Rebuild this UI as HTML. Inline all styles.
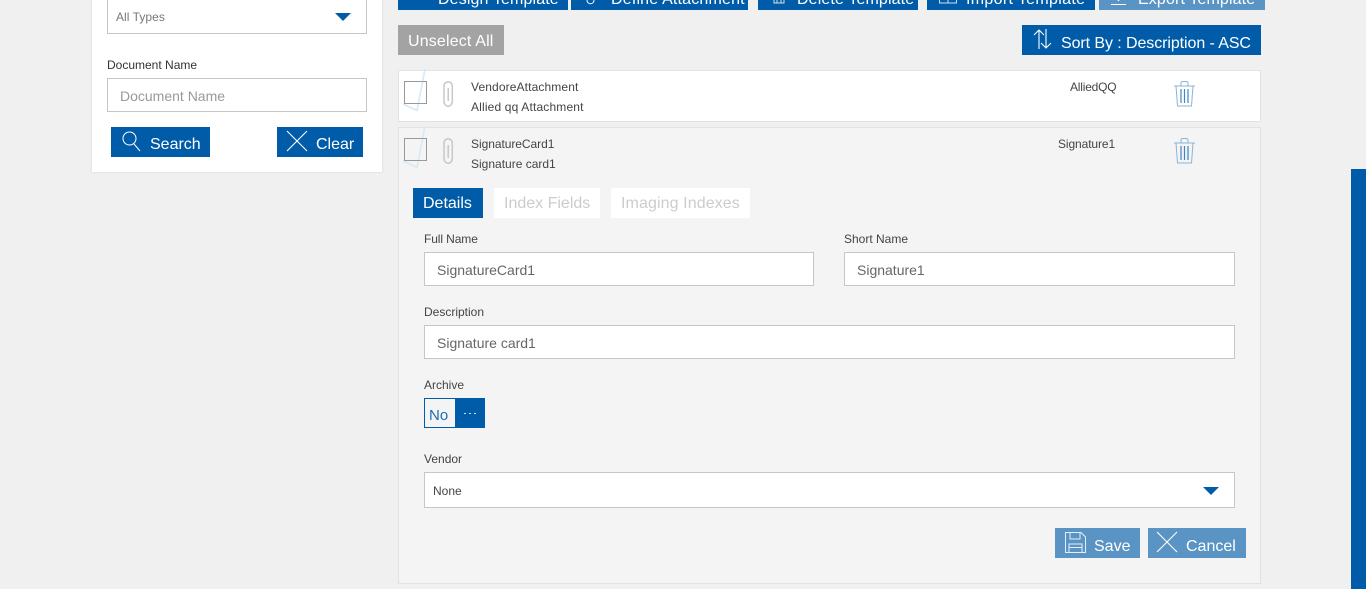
<!DOCTYPE html>
<html>
<head>
<meta charset="utf-8">
<style>
html,body{margin:0;padding:0;width:1366px;height:589px;overflow:hidden;background:#f0f0f0;font-family:"Liberation Sans",sans-serif;}
.a{position:absolute;box-sizing:border-box;}
.t{position:absolute;white-space:nowrap;line-height:16px;}
.btn{position:absolute;background:#005ca8;}
.w{color:#fff;font-size:16px;}
.s{font-size:12px;color:#444;}
.l{font-size:12px;color:#444;}
.inp{position:absolute;box-sizing:border-box;background:#fff;border:1px solid #c6c6c6;height:34px;}
.v{font-size:14px;color:#666;}
svg{position:absolute;overflow:visible;}
</style>
</head>
<body>
<!-- sidebar -->
<div class="a" style="left:92px;top:-5px;width:290px;height:177px;background:#fff;box-shadow:0 0 2px #d0d0d0;"></div>
<div class="inp" style="left:107px;top:-5px;width:260px;height:39px;"></div>
<div class="t" style="left:116px;top:9px;font-size:12px;color:#777;letter-spacing:.05px;">All Types</div>
<svg style="left:335px;top:13px" width="16" height="8"><path d="M0 0H16L8 8Z" fill="#005ca8"/></svg>
<div class="t" style="left:107px;top:57px;font-size:12px;color:#333;">Document Name</div>
<div class="inp" style="left:107px;top:78px;width:260px;"></div>
<div class="t" style="left:120px;top:88px;font-size:14px;color:#999;">Document Name</div>
<div class="btn" style="left:111px;top:127px;width:99px;height:30px;"></div>
<svg style="left:122px;top:131px" width="18" height="20" fill="none" stroke="#fff" stroke-width="1"><circle cx="7.5" cy="7.5" r="6.5"/><path d="M12 13L18 20"/></svg>
<div class="t w" style="left:150px;top:137px;">Search</div>
<div class="btn" style="left:277px;top:127px;width:86px;height:30px;"></div>
<svg style="left:287px;top:131px" width="20" height="20" stroke="#fff" stroke-width="1.1"><path d="M0 0L20 20M20 0L0 20"/></svg>
<div class="t w" style="left:316px;top:137px;">Clear</div>

<!-- top toolbar -->
<div class="btn" style="left:398px;top:-20px;width:170px;height:30px;"></div>
<svg style="left:412px;top:-4px" width="14" height="8" stroke="#fff" stroke-width="1"><path d="M6.500 0V4"/></svg>
<div class="t w" style="left:438px;top:-8px;letter-spacing:.13px;">Design Template</div>
<div class="btn" style="left:571px;top:-20px;width:177px;height:30px;"></div>
<svg style="left:586px;top:-4px" width="10" height="9" fill="none" stroke="#fff" stroke-width="1"><path d="M1 0V4C1 9 8 9 8 4V0"/></svg>
<div class="t w" style="left:611px;top:-8px;letter-spacing:.18px;">Define Attachment</div>
<div class="btn" style="left:758px;top:-20px;width:160px;height:30px;"></div>
<svg style="left:772px;top:-2px" width="14" height="7" fill="none" stroke="#cfe0f0" stroke-width="1"><path d="M0 0H14M2 0V5H12V0M5 0V5M9 0V5"/></svg>
<div class="t w" style="left:797px;top:-8px;letter-spacing:.13px;">Delete Template</div>
<div class="btn" style="left:927px;top:-20px;width:168px;height:30px;"></div>
<svg style="left:939px;top:-3px" width="18" height="8" fill="none" stroke="#cfe0f0" stroke-width="1"><path d="M0.500 0V6H17.500V0M9 0V6"/></svg>
<div class="t w" style="left:966px;top:-8px;letter-spacing:.33px;">Import Template</div>
<div class="btn" style="left:1099px;top:-20px;width:166px;height:30px;background:#5a94c4;"></div>
<svg style="left:1111px;top:-3px" width="16" height="9" fill="none" stroke="#fff" stroke-width="1"><path d="M0 7.500H15" /><path d="M5 1L7.500 3.500L10 1" /></svg>
<div class="t w" style="left:1138px;top:-8px;letter-spacing:.13px;">Export Template</div>

<!-- second row -->
<div class="a" style="left:398px;top:25px;width:106px;height:30px;background:#a3a3a3;"></div>
<div class="t w" style="left:408px;top:34px;letter-spacing:.16px;">Unselect All</div>
<div class="btn" style="left:1022px;top:25px;width:239px;height:30px;"></div>
<svg style="left:1033px;top:29px" width="19" height="21" fill="none" stroke="#fff" stroke-width="1.1"><path d="M6 20V1M1 6L6 1L11 6M13 0V19M8 14L13 19L18 14"/></svg>
<div class="t w" style="left:1061px;top:36px;letter-spacing:-.08px;">Sort By : Description - ASC</div>

<!-- row 1 -->
<div class="a" style="left:398px;top:70px;width:863px;height:52px;background:#fff;border:1px solid #e2e2e2;"></div>
<svg style="left:404px;top:69px" width="24" height="44" fill="none" stroke="#d8e8f5" stroke-width="1.6"><path d="M-1 35L13 41.500L21 0"/></svg>
<div class="a" style="left:404px;top:81px;width:23px;height:23px;border:1px solid #999;"></div>
<svg style="left:443px;top:81px" width="11" height="26" fill="none" stroke="#c8c8c8" stroke-width="1.500"><path d="M9.300 9V5C9.300 -.5 1 -.5 1 5V20C1 27 9.300 27 9.300 20V9M5.200 7V20"/></svg>
<div class="t s" style="left:471px;top:79px;letter-spacing:.12px;">VendoreAttachment</div>
<div class="t s" style="left:471px;top:99px;letter-spacing:.16px;">Allied qq Attachment</div>
<div class="t s" style="left:1070px;top:79px;letter-spacing:-.2px;">AlliedQQ</div>
<svg style="left:1174px;top:81px" width="21" height="26" fill="none" stroke="#8ab4d8" stroke-width="1"><path d="M0 5H21M7 5V2Q7 .5 9 .5H12Q14 .5 14 2V5M2 5L3.500 25H17.500L19 5"/><path d="M7 8V22M10.500 8V22M14 8V22" stroke="#3f86c2" stroke-width="1.200"/></svg>

<!-- row 2 panel -->
<div class="a" style="left:398px;top:127px;width:863px;height:457px;background:#f4f4f4;border:1px solid #e2e2e2;"></div>
<svg style="left:404px;top:126px" width="24" height="44" fill="none" stroke="#d8e8f5" stroke-width="1.6"><path d="M-1 35L13 41.500L21 0"/></svg>
<div class="a" style="left:404px;top:138px;width:23px;height:23px;border:1px solid #999;"></div>
<svg style="left:443px;top:138px" width="11" height="26" fill="none" stroke="#c8c8c8" stroke-width="1.500"><path d="M9.300 9V5C9.300 -.5 1 -.5 1 5V20C1 27 9.300 27 9.300 20V9M5.200 7V20"/></svg>
<div class="t s" style="left:471px;top:136px;letter-spacing:-.05px;">SignatureCard1</div>
<div class="t s" style="left:471px;top:156px;">Signature card1</div>
<div class="t s" style="left:1058px;top:136px;letter-spacing:-.1px;">Signature1</div>
<svg style="left:1174px;top:138px" width="21" height="26" fill="none" stroke="#8ab4d8" stroke-width="1"><path d="M0 5H21M7 5V2Q7 .5 9 .5H12Q14 .5 14 2V5M2 5L3.500 25H17.500L19 5"/><path d="M7 8V22M10.500 8V22M14 8V22" stroke="#3f86c2" stroke-width="1.200"/></svg>

<!-- tabs -->
<div class="btn" style="left:413px;top:188px;width:70px;height:30px;"></div>
<div class="t w" style="left:423px;top:196px;">Details</div>
<div class="a" style="left:494px;top:188px;width:106px;height:30px;background:#fff;"></div>
<div class="t" style="left:504px;top:196px;font-size:16px;color:#ccc;">Index Fields</div>
<div class="a" style="left:611px;top:188px;width:139px;height:30px;background:#fff;"></div>
<div class="t" style="left:621px;top:196px;font-size:16px;color:#ccc;letter-spacing:.1px;">Imaging Indexes</div>

<!-- form -->
<div class="t l" style="left:424px;top:231px;letter-spacing:-.1px;">Full Name</div>
<div class="inp" style="left:424px;top:252px;width:390px;"></div>
<div class="t v" style="left:437px;top:262px;">SignatureCard1</div>
<div class="t l" style="left:844px;top:231px;">Short Name</div>
<div class="inp" style="left:844px;top:252px;width:391px;"></div>
<div class="t v" style="left:857px;top:262px;">Signature1</div>
<div class="t l" style="left:424px;top:304px;">Description</div>
<div class="inp" style="left:424px;top:325px;width:811px;"></div>
<div class="t v" style="left:437px;top:335px;">Signature card1</div>
<div class="t l" style="left:424px;top:377px;">Archive</div>
<div class="a" style="left:424px;top:398px;width:32px;height:30px;border:1px solid #005ca8;background:#f4f4f4;"></div>
<div class="t" style="left:429px;top:408px;font-size:15px;color:#1d6cb0;">No</div>
<div class="btn" style="left:455px;top:398px;width:30px;height:30px;"></div>
<svg style="left:464px;top:413px" width="12" height="1"><path d="M0 .5H2M5 .5H7M10 .5H12" stroke="#cfe0f0" stroke-width="1"/></svg>
<div class="t l" style="left:424px;top:451px;">Vendor</div>
<div class="inp" style="left:424px;top:472px;width:811px;height:36px;"></div>
<div class="t" style="left:433px;top:483px;font-size:12px;color:#444;">None</div>
<svg style="left:1203px;top:487px" width="16" height="8"><path d="M0 0H16L8 8Z" fill="#005ca8"/></svg>

<!-- actions -->
<div class="btn" style="left:1055px;top:528px;width:85px;height:30px;background:#5a94c4;"></div>
<svg style="left:1065px;top:532px" width="21" height="21" fill="none" stroke="#e4eef6" stroke-width="1"><path d="M.5 .5H16L20.500 5V20.500H.5ZM5 .5V7H15V.5M4 20.500V12H17V20.500M4 15.500H17"/></svg>
<div class="t w" style="left:1094px;top:539px;">Save</div>
<div class="btn" style="left:1148px;top:528px;width:98px;height:30px;background:#5a94c4;"></div>
<svg style="left:1157px;top:532px" width="20" height="20" stroke="#fff" stroke-width="1.1"><path d="M0 0L20 20M20 0L0 20"/></svg>
<div class="t w" style="left:1186px;top:539px;">Cancel</div>

<!-- right bar -->
<div class="a" style="left:1351px;top:169px;width:15px;height:420px;background:#005ca8;"></div>
</body>
</html>
